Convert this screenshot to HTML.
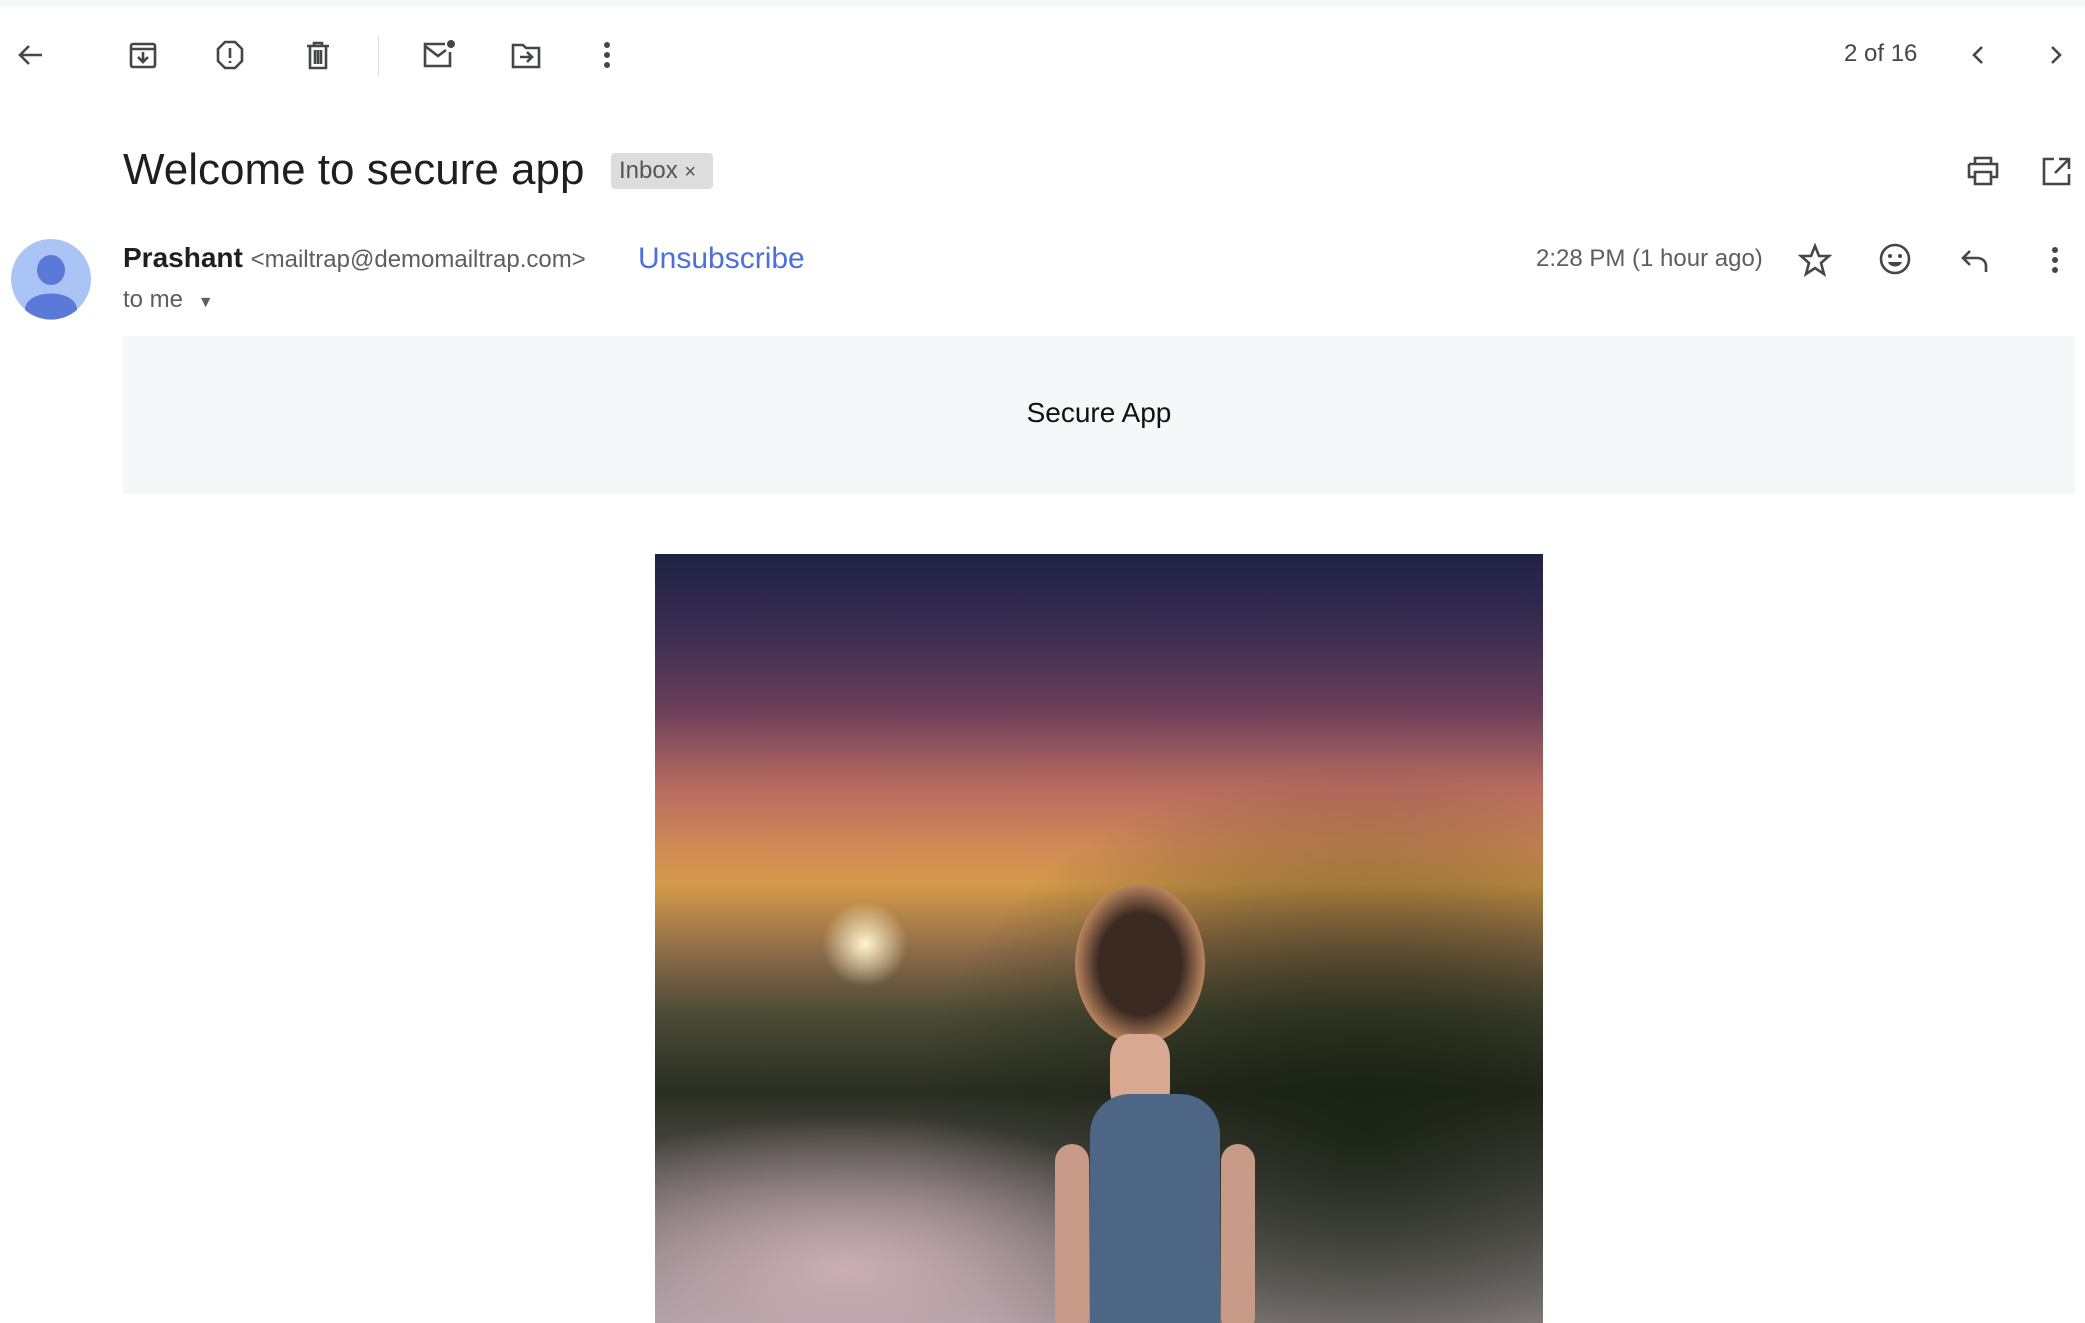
<!DOCTYPE html>
<html><head><style>
html,body{margin:0;width:2085px;height:1323px;overflow:hidden}
body{background:#fff;font-family:"Liberation Sans",sans-serif;position:relative}
.a{position:absolute}
svg.i{position:absolute;fill:none;stroke:#444746;stroke-width:2.6}
</style></head><body>
<div class="a" style="left:0;top:0;width:2085px;height:7px;background:#f6f8fc"></div>
<svg class="i" style="left:14px;top:39px" width="32" height="32" viewBox="0 0 32 32"><path d="M28 16H6M15 7l-9 9 9 9"/></svg>
<svg class="i" style="left:127px;top:39px" width="32" height="32" viewBox="0 0 32 32"><rect x="4" y="5" width="24" height="23" rx="2"/><path d="M4 10h24M16 13v10M11 18l5 5 5-5"/></svg>
<svg class="i" style="left:214px;top:39px" width="32" height="32" viewBox="0 0 32 32"><path d="M11 3h10l7 7v12l-7 7H11l-7-7V10z"/><path d="M16 9v10M16 22v2"/></svg>
<svg class="i" style="left:302px;top:39px" width="32" height="32" viewBox="0 0 32 32"><path d="M5 7h22M12 7V4h8v3M8 7v22h16V7M13 11v14M16 11v14M19 11v14"/></svg>
<div class="a" style="left:378px;top:36px;width:1px;height:40px;background:#e0e0e0"></div>
<svg class="i" style="left:421px;top:37px" width="36" height="34" viewBox="0 0 36 34"><path d="M24 7H4v22h25V15"/><path d="M4 9l13 10 8-6"/><circle cx="30" cy="7" r="4" fill="#444746" stroke="none"/></svg>
<svg class="i" style="left:509px;top:39px" width="34" height="32" viewBox="0 0 34 32"><path d="M4 6h10l3 3h13v19H4z"/><path d="M11 18h12M18 13l5 5-5 5"/></svg>
<svg class="a" style="left:599px;top:39px" width="16" height="32"><circle cx="8" cy="6" r="3" fill="#444746"/><circle cx="8" cy="16" r="3" fill="#444746"/><circle cx="8" cy="26" r="3" fill="#444746"/></svg>
<div class="a" style="left:1844px;top:40px;font-size:24px;color:#444746">2 of 16</div>
<svg class="i" style="left:1964px;top:41px" width="28" height="28" viewBox="0 0 28 28"><path d="M18 6l-8 8 8 8"/></svg>
<svg class="i" style="left:2042px;top:41px" width="28" height="28" viewBox="0 0 28 28"><path d="M10 6l8 8-8 8"/></svg>
<div class="a" style="left:123px;top:145px;font-size:44px;color:#1f1f1f">Welcome to secure app</div>
<div class="a" style="left:611px;top:153px;width:102px;height:36px;background:#ddd;border-radius:4px;font-size:24px;color:#555;line-height:36px;padding-left:8px;box-sizing:border-box">Inbox <span style="font-size:20px">×</span></div>
<svg class="i" style="left:1965px;top:155px" width="36" height="32" viewBox="0 0 36 32"><path d="M10 9V3h16v6M4 9h28v13h-6M10 22H4V9M10 17h16v12H10z"/></svg>
<svg class="i" style="left:2040px;top:155px" width="32" height="32" viewBox="0 0 32 32"><path d="M14 4H4v25h25V19M19 4h10v10M29 4L15 18"/></svg>
<svg class="a" style="left:10px;top:238px" width="82" height="82"><circle cx="41" cy="41" r="40" fill="#aac4f6"/><ellipse cx="41" cy="32" rx="14" ry="15" fill="#5b7ad8"/><path d="M15 72c0-22 52-22 52 0a40 40 0 0 1-52 0z" fill="#5b7ad8"/></svg>
<div class="a" style="left:123px;top:242px;font-size:28px;color:#1f1f1f;white-space:nowrap"><b>Prashant</b> <span style="font-size:24px;color:#5e5e5e">&lt;mailtrap@demomailtrap.com&gt;</span></div>
<div class="a" style="left:638px;top:242px;font-size:30px;color:#4c6fe0">Unsubscribe</div>
<div class="a" style="left:123px;top:286px;font-size:24px;color:#5e5e5e">to me <span style="font-size:16px;margin-left:8px">▼</span></div>
<div class="a" style="left:1536px;top:245px;font-size:24px;color:#5e5e5e">2:28 PM (1 hour ago)</div>
<svg class="i" style="left:1798px;top:243px" width="34" height="34" viewBox="0 0 34 34"><path d="M17 3l4 10h10l-8 7 3 11-9-6-9 6 3-11-8-7h10z"/></svg>
<svg class="i" style="left:1878px;top:242px" width="34" height="34" viewBox="0 0 34 34"><circle cx="17" cy="17" r="14"/><circle cx="12" cy="14" r="2" fill="#444746" stroke="none"/><circle cx="22" cy="14" r="2" fill="#444746" stroke="none"/><path d="M10 20h14c-2 6-12 6-14 0z" fill="#444746" stroke="none"/></svg>
<svg class="i" style="left:1958px;top:243px" width="34" height="34" viewBox="0 0 34 34"><path d="M28 29v-6c0-5-4-8-9-8H5M12 8l-7 7 7 7"/></svg>
<svg class="a" style="left:2047px;top:243px" width="16" height="34"><circle cx="8" cy="7" r="3" fill="#444746"/><circle cx="8" cy="17" r="3" fill="#444746"/><circle cx="8" cy="27" r="3" fill="#444746"/></svg>
<div class="a" style="left:123px;top:336px;width:1952px;height:158px;background:#f5f7f8"></div>
<div class="a" style="left:123px;top:397px;width:1952px;text-align:center;font-size:28px;color:#111">Secure App</div>
<div class="a" style="left:655px;top:554px;width:888px;height:769px;overflow:hidden;background:linear-gradient(180deg,#1f2244 0%,#3a2d52 10%,#6a3e5a 20%,#b66a60 30%,#d08a55 38%,#d59a48 43%,#8a6a48 52%,#4a4a36 60%,#2a2e22 70%,#5a5555 82%,#a89aa0 100%)">
<div class="a" style="left:0;top:0;width:888px;height:769px;background:radial-gradient(ellipse at 80% 75%,rgba(20,30,15,.8),rgba(20,30,15,0) 45%)"></div>
<div class="a" style="left:160px;top:340px;width:100px;height:100px;border-radius:50%;background:radial-gradient(#fff6d0,rgba(255,220,140,0) 60%)"></div>
<div class="a" style="left:-50px;top:560px;width:600px;height:260px;background:radial-gradient(ellipse at 40% 60%,#c9aeb5,rgba(160,130,140,0) 70%)"></div>
<div class="a" style="left:420px;top:330px;width:130px;height:160px;border-radius:50%;background:radial-gradient(#3a2a22 45%,#c08a60 72%,rgba(0,0,0,0) 75%)"></div>
<div class="a" style="left:455px;top:480px;width:60px;height:80px;background:#d8a890;border-radius:30%"></div>
<div class="a" style="left:435px;top:540px;width:130px;height:240px;background:#4e6686;border-radius:40px 40px 0 0"></div>
<div class="a" style="left:400px;top:590px;width:34px;height:190px;background:#c89a88;border-radius:17px"></div>
<div class="a" style="left:566px;top:590px;width:34px;height:190px;background:#c89a88;border-radius:17px"></div>
</div>
</body></html>
